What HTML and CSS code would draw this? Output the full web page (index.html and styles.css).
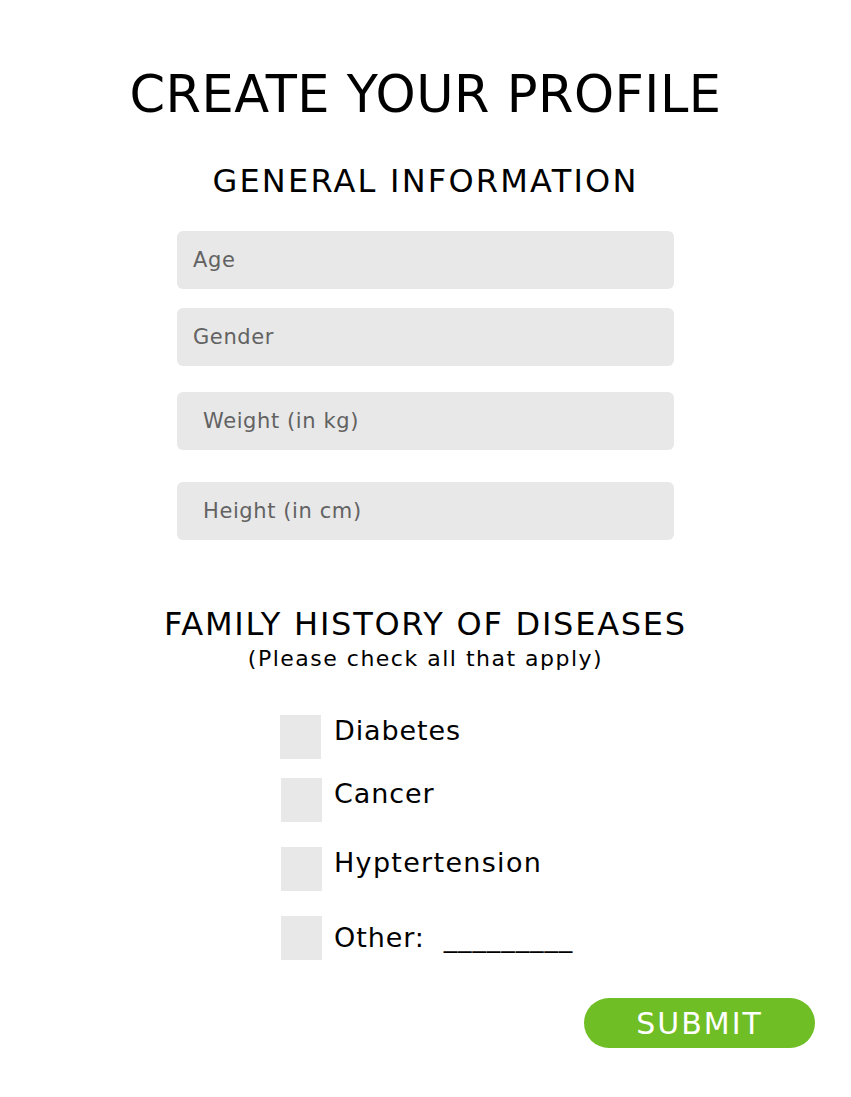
FILE: index.html
```html
<!DOCTYPE html>
<html>
<head>
<meta charset="utf-8">
<link rel="stylesheet" href="styles.css">
</head>
<body>
<main class="page">
  <h1 class="title">CREATE YOUR PROFILE</h1>
  <h2 class="section">GENERAL INFORMATION</h2>
  <div class="fields">
    <div class="field f-age">Age</div>
    <div class="field f-gender">Gender</div>
    <div class="field f-weight indent">Weight (in kg)</div>
    <div class="field f-height indent">Height (in cm)</div>
  </div>
  <h2 class="section family">FAMILY HISTORY OF DISEASES</h2>
  <p class="note">(Please check all that apply)</p>
  <ul class="checks">
    <li class="check c1"><span class="box"></span><span class="label">Diabetes</span></li>
    <li class="check c2"><span class="box"></span><span class="label">Cancer</span></li>
    <li class="check c3"><span class="box"></span><span class="label">Hyptertension</span></li>
    <li class="check c4"><span class="box"></span><span class="label">Other:&nbsp; _________</span></li>
  </ul>
  <div class="actions"><button class="submit">SUBMIT</button></div>
</main>
</body>
</html>
```

FILE: styles.css
```css
* { box-sizing: border-box; }
html, body { margin: 0; padding: 0; background: #fff; }
body { font-family: "DejaVu Sans", "Open Sans", sans-serif; color: #000; }
.page { width: 851px; height: 1097px; display: flex; flex-direction: column; align-items: center; }
.title { margin: 65px 0 0; font-weight: 400; font-size: 51px; line-height: 60px; letter-spacing: 0.5px; }
.section { margin: 37px 0 0; font-weight: 400; font-size: 32px; line-height: 38px; letter-spacing: 2.2px; }
.fields { margin-top: 31px; width: 497px; display: flex; flex-direction: column; }
.field { height: 58px; background: #e8e8e8; border-radius: 6px; padding-left: 16px; display: flex; align-items: center; font-size: 21px; letter-spacing: 0.6px; color: #626262; }
.field.indent { padding-left: 26px; }
.f-gender { margin-top: 19px; }
.f-weight { margin-top: 26px; }
.f-height { margin-top: 32px; }
.family { margin-top: 65px; letter-spacing: 1.75px; }
.note { margin: 2px 0 0; font-size: 22px; line-height: 28px; letter-spacing: 1.5px; }
.checks { list-style: none; margin: 42px 0 0; padding: 0; width: 320px; align-self: flex-start; margin-left: 280px; }
.check { display: flex; align-items: flex-start; }
.box { width: 41px; height: 44px; background: #e8e8e8; flex: none; }
.label { margin-left: 13px; font-size: 27px; line-height: 32px; letter-spacing: 0.9px; white-space: nowrap; }
.c2, .c3, .c4 { padding-left: 1px; }
.c2 { margin-top: 19px; }
.c2 .label { margin-left: 12px; }
.c3 { margin-top: 25px; }
.c3 .label { margin-left: 12px; letter-spacing: 1.3px; }
.c4 { margin-top: 25px; }
.c4 .label { margin-left: 12px; margin-top: 6px; }
.actions { width: 100%; display: flex; justify-content: flex-end; padding-right: 36px; margin-top: 38px; }
.submit { width: 231px; height: 50px; border: 0; border-radius: 25px; background: #6fbe25; color: #fff; font-family: "DejaVu Sans", sans-serif; font-size: 30px; letter-spacing: 2px; padding: 0; }
```
